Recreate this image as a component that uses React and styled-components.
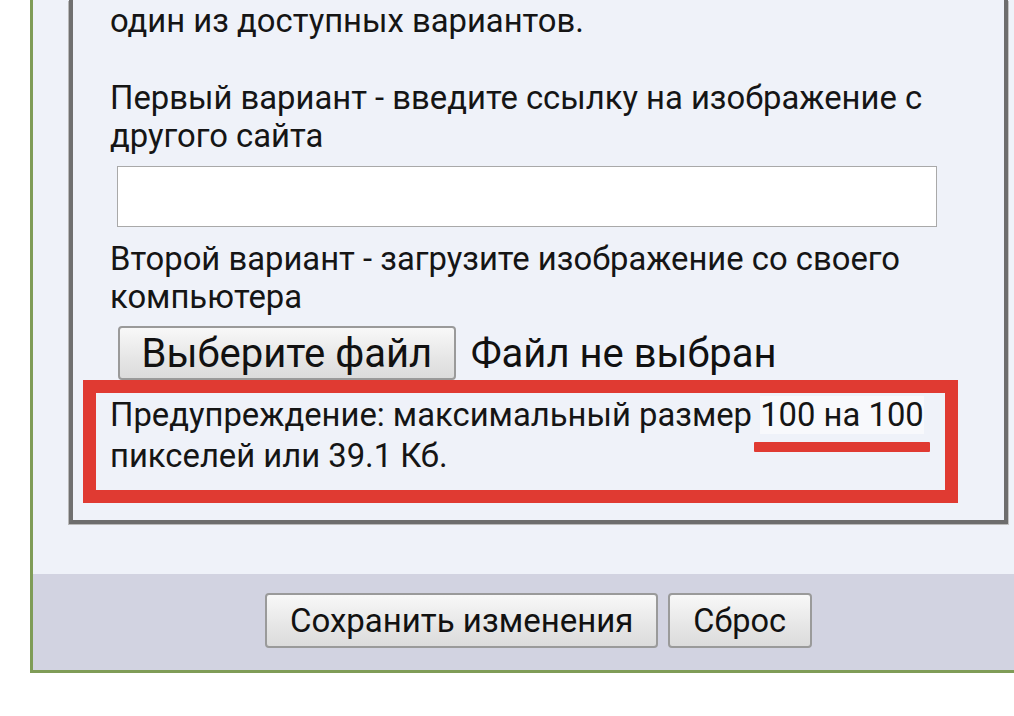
import styled, { createGlobalStyle } from "styled-components";

const GlobalStyle = createGlobalStyle`
  html, body {
    margin: 0;
    padding: 0;
    background: #ffffff;
    overflow: hidden;
  }
  body {
    width: 1014px;
    height: 716px;
    font-family: Roboto, "Liberation Sans", Arial, sans-serif;
    color: #151515;
  }
`;

const Panel = styled.div`
  margin-left: 30px;
  width: 1011px;
  border-left: 3px solid #7f9c57;
  border-bottom: 3px solid #7f9c57;
  background: #eff2f9;
`;

const Content = styled.div`
  padding: 0 0 50px 36px;
`;

const Fieldset = styled.fieldset`
  margin: 0;
  width: 939px;
  box-sizing: border-box;
  padding: 2px 30px 17px 37px;
  border: 4px solid #6d6d6d;
  border-top: none;
  border-left-color: #707070;
  box-shadow: -1px 1px 0 #b9b9b9, 1px 1px 0 #c4c4c4;
  background: #eff2f9;
`;

const Text = styled.p`
  margin: ${(p) => p.$top || 0}px 0 0;
  font-size: 32.8px;
  line-height: 38px;
`;

const UrlInput = styled.input`
  display: block;
  margin: 11px 0 13px 7px;
  width: 820px;
  height: 61px;
  box-sizing: border-box;
  border: 1px solid #a9a9a9;
  background: #ffffff;
  font-size: 26px;
  outline: none;
`;

const FileRow = styled.div`
  display: flex;
  align-items: center;
  margin: 10px 0 0 8px;
  height: 54px;
  gap: 15px;
`;

const Button = styled.button`
  height: ${(p) => p.$h || 55}px;
  box-sizing: border-box;
  padding: 0 ${(p) => p.$pad || 24}px;
  border: 2px solid #9a9a9a;
  border-radius: 4px;
  background: linear-gradient(#f8f8f8, #e6e6e6 60%, #dcdcdc);
  font-family: Roboto, "Liberation Sans", Arial, sans-serif;
  font-size: ${(p) => p.$size || 33}px;
  color: #111;
  cursor: pointer;
`;

const FileLabel = styled.span`
  font-size: 40px;
  color: #111;
`;

const Warning = styled.div`
  position: relative;
  margin-left: -27px;
  width: 875px;
  box-sizing: border-box;
  border: 13px solid #e03a32;
  padding: 2px 0 13px 14px;
  font-size: 32.8px;
  line-height: 41px;
`;

const Mark = styled.span`
  background: #f8f9fc;
`;

const Underline = styled.span`
  position: absolute;
  left: 658px;
  top: 49px;
  width: 176px;
  height: 10px;
  background: #e03a32;
  border-radius: 1px;
`;

const Footer = styled.div`
  display: flex;
  justify-content: center;
  gap: 10px;
  padding: 19px 0 22px;
  background: #d2d3e1;
`;

export default function App() {
  return (
    <>
      <GlobalStyle />
      <Panel>
        <Content>
          <Fieldset>
            <Text>один из доступных вариантов.</Text>
            <Text $top={39}>
              Первый вариант - введите ссылку на изображение с другого сайта
            </Text>
            <UrlInput type="text" />
            <Text>
              Второй вариант - загрузите изображение со своего компьютера
            </Text>
            <FileRow>
              <Button type="button" $h={54} $size={40} $pad={21.5}>
                Выберите файл
              </Button>
              <FileLabel>Файл не выбран</FileLabel>
            </FileRow>
            <Warning>
              Предупреждение: максимальный размер <Mark>100 на 100</Mark>{" "}
              пикселей или 39.1 Кб.
              <Underline />
            </Warning>
          </Fieldset>
        </Content>
        <Footer>
          <Button type="submit" $pad={22.5}>Сохранить изменения</Button>
          <Button type="reset" $size={32.5} $pad={23.5}>Сброс</Button>
        </Footer>
      </Panel>
    </>
  );
}
